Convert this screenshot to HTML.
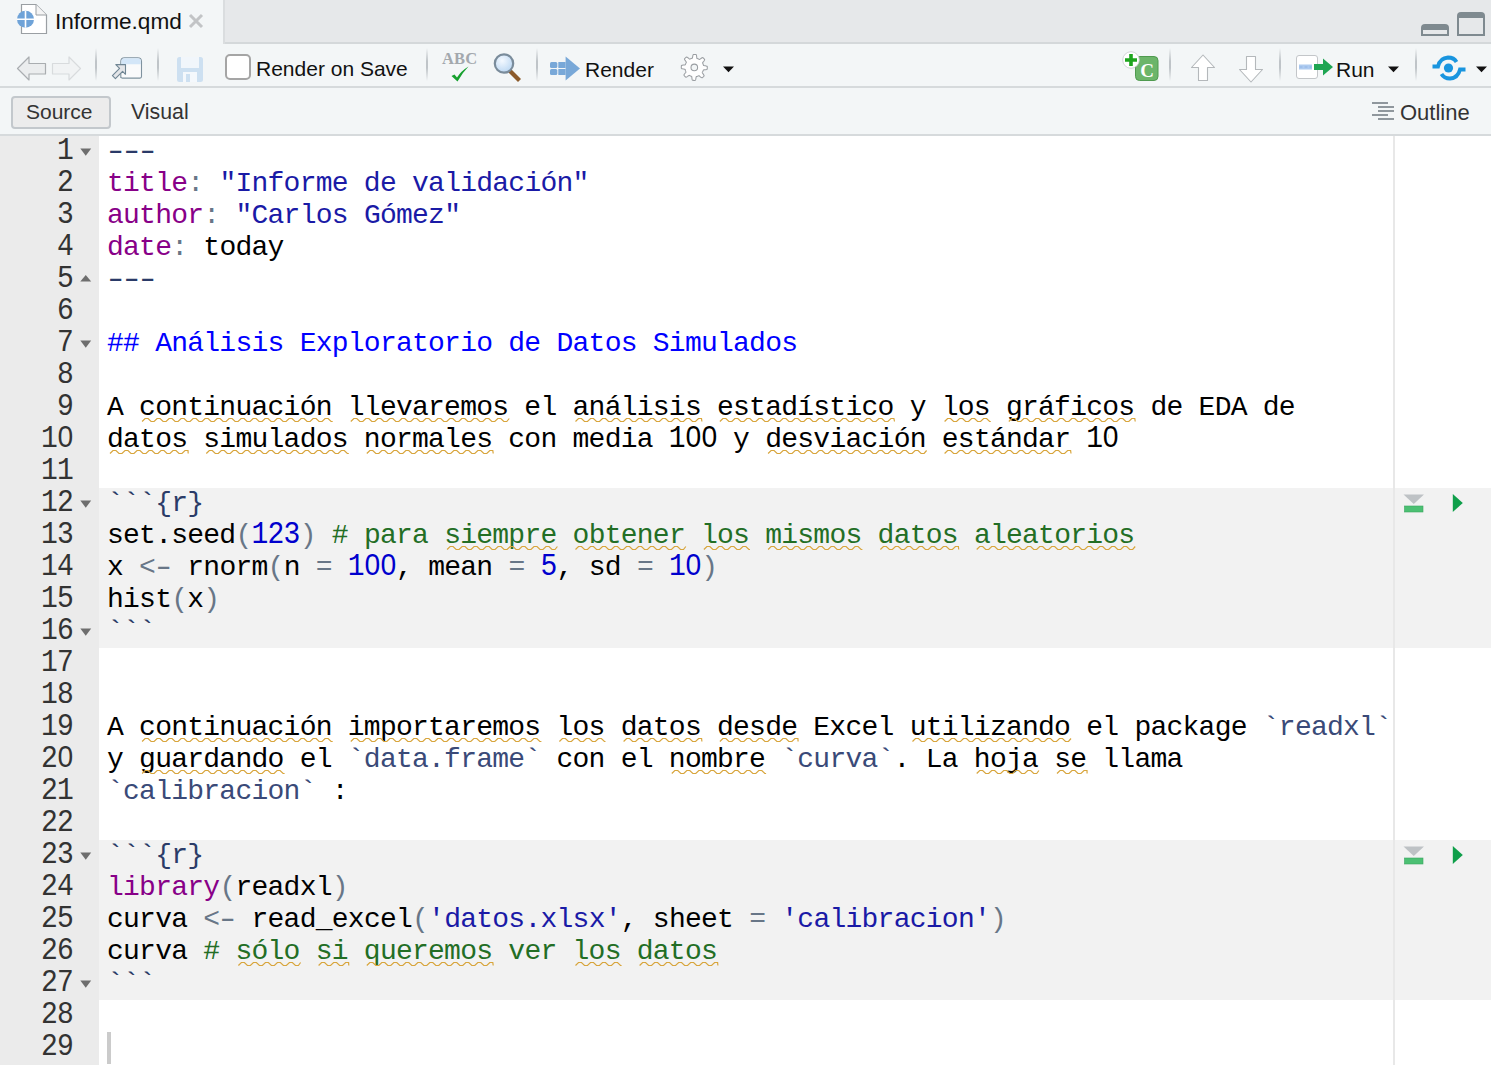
<!DOCTYPE html>
<html><head><meta charset="utf-8">
<style>
*{box-sizing:border-box;margin:0;padding:0}
html,body{width:1491px;height:1065px;overflow:hidden;background:#fff;font-family:"Liberation Sans",sans-serif}
.abs{position:absolute}
#tabbar{left:0;top:0;width:1491px;height:44px;background:#e6e8ea}
#tab{left:0;top:0;width:223px;height:44px;background:#f3f6f7}
#tabborder{left:223px;top:42px;width:1268px;height:2px;background:#d4d8da}
#tb1{left:0;top:44px;width:1491px;height:42px;background:#f3f6f7}
#tb1b{left:0;top:86px;width:1491px;height:2px;background:#d6dadc}
#tb2{left:0;top:88px;width:1491px;height:46px;background:#f3f6f7}
#tb2b{left:0;top:134px;width:1491px;height:2px;background:#d6dadc}
#gutter{left:0;top:136px;width:99px;height:929px;background:#ebebeb}
#editor{left:99px;top:136px;width:1392px;height:929px;background:#fff}
.chunk{left:99px;width:1392px;background:#f2f2f2}
#margin{left:1393px;top:136px;width:2px;height:929px;background:#e8e8e8}
.ui{font-family:"Liberation Sans",sans-serif;color:#1a1a1a;white-space:nowrap}
.code{font-family:"Liberation Mono",monospace;font-size:28px;letter-spacing:-0.75px;line-height:32px;white-space:pre;color:#000}
.ln{position:absolute;left:0;width:73px;text-align:right;transform:scaleY(1.1);transform-origin:0 23px;font-family:"Liberation Mono",monospace;font-size:28px;letter-spacing:-0.75px;line-height:32px;color:#333}
.row{position:absolute;left:107px;height:32px}
.kw{color:#880088}
.str{color:#1a1aa6}
.num{color:#0000cd}
.op{color:#687687}
.com{color:#236e25}
.tick{color:#2b3c68}
.yd{color:#2a3a68}
.icode{color:#3a4a78}
.hd{color:#0000ff}
.sp{}
.hy{display:inline-block;transform:scaleX(1.45)}
.z,.zc{position:relative}
.z::after,.zc::after{content:"";position:absolute;left:6.4px;top:10.8px;width:4.2px;height:4.6px;background:#fff}
.zc::after{background:#f2f2f2}
.zg{position:relative}
.zg::after{content:"";position:absolute;left:6.4px;top:10.8px;width:4.2px;height:4.6px;background:#ebebeb}
.dg{display:inline-block;transform:scaleY(1.1);transform-origin:0 23px}
.sep{width:2px;background:linear-gradient(#f3f6f7,#bfc4c8 40%,#bfc4c8 60%,#f3f6f7)}
</style></head><body>
<div class="abs" id="tabbar"></div>
<div class="abs" id="tab"></div>
<div class="abs" id="tabborder"></div>
<div class="abs" style="left:223px;top:0;width:2px;height:44px;background:#dadddf"></div>
<div class="abs" id="tb1"></div>
<div class="abs" id="tb1b"></div>
<div class="abs" id="tb2"></div>
<div class="abs" id="tb2b"></div>
<div class="abs" id="gutter"></div>
<div class="abs" id="editor"></div>
<div class="abs chunk" style="top:488px;height:160px"></div>
<div class="abs chunk" style="top:840px;height:160px"></div>
<div class="abs" id="margin"></div>

<!-- tab -->
<svg class="abs" style="left:14px;top:3px" width="36" height="34" viewBox="0 0 36 34">
  <path d="M7.5 1.5 H22 L32.5 12 V30.5 H7.5 Z" fill="#fff" stroke="#9a9fa3" stroke-width="1.2"/>
  <path d="M22 1.5 V12 H32.5" fill="#f4f4f4" stroke="#9a9fa3" stroke-width="1"/>
  <circle cx="11.5" cy="16.3" r="8.5" fill="#6fa3d8"/>
  <path d="M11.5 7.8 V24.8 M3 16.3 H20" stroke="#fff" stroke-width="1.6"/>
</svg>
<div class="abs ui" style="left:55px;top:9px;font-size:22.6px;color:#111">Informe.qmd</div>
<svg class="abs" style="left:188px;top:13px" width="16" height="16" viewBox="0 0 16 16"><path d="M2 2 L14 14 M14 2 L2 14" stroke="#c2c4c6" stroke-width="3"/></svg>
<!-- min/max -->
<svg class="abs" style="left:1420px;top:11px" width="66" height="26" viewBox="0 0 66 26">
  <path d="M1 25 V17 Q1 13 5 13 H25 Q29 13 29 17 V25 Z" fill="#7f8a90"/>
  <rect x="3" y="19" width="24" height="4" fill="#e6e8ea"/>
  <path d="M37 25 V5 Q37 1 41 1 H61 Q65 1 65 5 V25 Z" fill="#7f8a90"/>
  <rect x="39" y="7" width="24" height="16" fill="#e6e8ea"/>
</svg>

<!-- toolbar 1 -->
<svg class="abs" style="left:15px;top:55px" width="68" height="28" viewBox="0 0 68 28">
  <path d="M2.5 13.5 L14 2 V8.5 H30.5 V19 H14 V25 Z" fill="#ebedee" stroke="#a9adb0" stroke-width="1.2" stroke-linejoin="round"/>
  <path d="M65.5 13.5 L54 2 V8.5 H37.5 V19 H54 V25 Z" fill="#f1f3f4" stroke="#d8dbdd" stroke-width="1.2" stroke-linejoin="round"/>
</svg>
<div class="abs sep" style="left:95px;top:48px;height:33px"></div>
<svg class="abs" style="left:111px;top:55px" width="33" height="26" viewBox="0 0 33 26">
  <path d="M9.8 23 V6.5 Q9.8 2.7 13.6 2.7 H26.7 Q30.5 2.7 30.5 6.5 V21.6 Q30.5 23.1 29 23.1 H11.3 Q9.8 23.1 9.8 21.6 Z" fill="#f9fafb" stroke="#7f929f" stroke-width="1.1"/>
  <path d="M10.4 9.2 V6.5 Q10.4 3.3 13.6 3.3 H26.7 Q29.9 3.3 29.9 6.5 V9.2 Z" fill="#d3e6f8"/>
  <path d="M4.8 9.6 H14.5 V19.3 L11.6 16.4 L4.4 23.6 L1.4 20.6 L8.6 13.4 Z" fill="#e3e5e8" stroke="#6f8593" stroke-width="1.1" stroke-linejoin="round"/>
</svg>
<div class="abs sep" style="left:157px;top:48px;height:33px"></div>
<svg class="abs" style="left:176px;top:56px" width="28" height="27" viewBox="0 0 28 27">
  <rect x="1" y="1" width="26" height="25" rx="2.5" fill="#cde0f1"/>
  <rect x="5" y="1" width="18" height="11" fill="#f1f6fb"/>
  <rect x="7" y="16" width="14" height="10" fill="#f4f8fc"/>
  <rect x="10" y="18" width="4" height="8" fill="#cde0f1"/>
</svg>
<div class="abs" style="left:225px;top:54px;width:26px;height:26px;background:#fff;border:2px solid #a5a5a5;border-radius:5px"></div>
<div class="abs ui" style="left:256px;top:57px;font-size:21px;color:#111">Render on Save</div>
<div class="abs sep" style="left:426px;top:48px;height:33px"></div>
<div class="abs" style="left:442px;top:49px;font-family:'Liberation Serif',serif;font-weight:bold;font-size:16.5px;line-height:20px;color:#a3a8ad;letter-spacing:0.2px">ABC</div>
<svg class="abs" style="left:450px;top:65px" width="21" height="18" viewBox="0 0 21 18"><path d="M1.5 11 L4.5 9.5 L7 12.5 Q11 6 18.5 1.5 Q12.5 7.5 7.5 16.5 Z" fill="#16a02e"/></svg>
<svg class="abs" style="left:492px;top:52px" width="32" height="31" viewBox="0 0 32 31">
  <defs><radialGradient id="lg" cx="0.4" cy="0.35" r="0.7"><stop offset="0" stop-color="#f4f9ff"/><stop offset="1" stop-color="#b9d6f2"/></radialGradient></defs>
  <path d="M17.5 18.5 L27.5 28.5" stroke="#8b5a2b" stroke-width="4.2" stroke-linecap="butt"/>
  <circle cx="12" cy="11.5" r="9.2" fill="url(#lg)" stroke="#7a8c9b" stroke-width="2.2"/>
</svg>
<div class="abs sep" style="left:536px;top:48px;height:33px"></div>
<svg class="abs" style="left:549px;top:56px" width="33" height="26" viewBox="0 0 33 26">
  <rect x="1" y="6" width="7.3" height="6" rx="1.5" fill="#78a8d8"/>
  <rect x="9.3" y="6" width="7.3" height="6" rx="0.5" fill="#78a8d8"/>
  <rect x="1" y="13" width="7.3" height="6" rx="1.5" fill="#78a8d8"/>
  <rect x="9.3" y="13" width="7.3" height="6" rx="0.5" fill="#78a8d8"/>
  <path d="M16.6 0.5 L31 12.5 L16.6 24.5 Z" fill="#78a8d8"/>
</svg>
<div class="abs ui" style="left:585px;top:58px;font-size:21px;color:#111">Render</div>
<svg class="abs" style="left:680px;top:53px" width="29" height="29" viewBox="0 0 29 29"><path d="M14.75 1.41 L15.01 1.42 L15.26 1.44 L15.52 1.46 L15.77 1.48 L16.02 1.52 L16.25 1.73 L16.43 2.16 L16.56 2.76 L16.65 3.45 L16.72 4.14 L16.78 4.74 L16.86 5.17 L16.99 5.39 L17.17 5.45 L17.34 5.51 L17.51 5.57 L17.69 5.63 L17.86 5.70 L18.03 5.77 L18.20 5.85 L18.37 5.92 L18.53 6.01 L18.69 6.09 L18.86 6.18 L19.02 6.27 L19.18 6.36 L19.34 6.46 L19.59 6.41 L19.97 6.19 L20.46 5.84 L21.02 5.44 L21.60 5.06 L22.14 4.76 L22.58 4.61 L22.89 4.65 L23.08 4.82 L23.27 4.99 L23.45 5.17 L23.63 5.35 L23.81 5.53 L23.98 5.72 L24.15 5.91 L24.31 6.11 L24.47 6.31 L24.63 6.51 L24.64 6.82 L24.46 7.25 L24.13 7.77 L23.71 8.32 L23.26 8.85 L22.88 9.32 L22.64 9.68 L22.58 9.93 L22.66 10.10 L22.74 10.26 L22.82 10.43 L22.90 10.60 L22.97 10.76 L23.04 10.94 L23.10 11.11 L23.17 11.28 L23.23 11.46 L23.28 11.63 L23.34 11.81 L23.38 11.99 L23.43 12.17 L23.48 12.34 L23.69 12.49 L24.11 12.60 L24.71 12.71 L25.39 12.82 L26.07 12.95 L26.66 13.13 L27.08 13.34 L27.27 13.58 L27.29 13.83 L27.30 14.09 L27.30 14.34 L27.30 14.60 L27.29 14.85 L27.28 15.11 L27.26 15.36 L27.24 15.62 L27.22 15.87 L27.18 16.12 L26.97 16.35 L26.54 16.53 L25.94 16.66 L25.25 16.75 L24.56 16.82 L23.96 16.88 L23.53 16.96 L23.31 17.09 L23.25 17.27 L23.19 17.44 L23.13 17.61 L23.07 17.79 L23.00 17.96 L22.93 18.13 L22.85 18.30 L22.78 18.47 L22.69 18.63 L22.61 18.79 L22.52 18.96 L22.43 19.12 L22.34 19.28 L22.24 19.44 L22.29 19.69 L22.51 20.07 L22.86 20.56 L23.26 21.12 L23.64 21.70 L23.94 22.24 L24.09 22.68 L24.05 22.99 L23.88 23.18 L23.71 23.37 L23.53 23.55 L23.35 23.73 L23.17 23.91 L22.98 24.08 L22.79 24.25 L22.59 24.41 L22.39 24.57 L22.19 24.73 L21.88 24.74 L21.45 24.56 L20.93 24.23 L20.38 23.81 L19.85 23.36 L19.38 22.98 L19.02 22.74 L18.77 22.68 L18.60 22.76 L18.44 22.84 L18.27 22.92 L18.10 23.00 L17.94 23.07 L17.76 23.14 L17.59 23.20 L17.42 23.27 L17.24 23.33 L17.07 23.38 L16.89 23.44 L16.71 23.48 L16.53 23.53 L16.36 23.58 L16.21 23.79 L16.10 24.21 L15.99 24.81 L15.88 25.49 L15.75 26.17 L15.57 26.76 L15.36 27.18 L15.12 27.37 L14.87 27.39 L14.61 27.40 L14.36 27.40 L14.10 27.40 L13.85 27.39 L13.59 27.38 L13.34 27.36 L13.08 27.34 L12.83 27.32 L12.58 27.28 L12.35 27.07 L12.17 26.64 L12.04 26.04 L11.95 25.35 L11.88 24.66 L11.82 24.06 L11.74 23.63 L11.61 23.41 L11.43 23.35 L11.26 23.29 L11.09 23.23 L10.91 23.17 L10.74 23.10 L10.57 23.03 L10.40 22.95 L10.23 22.88 L10.07 22.79 L9.91 22.71 L9.74 22.62 L9.58 22.53 L9.42 22.44 L9.26 22.34 L9.01 22.39 L8.63 22.61 L8.14 22.96 L7.58 23.36 L7.00 23.74 L6.46 24.04 L6.02 24.19 L5.71 24.15 L5.52 23.98 L5.33 23.81 L5.15 23.63 L4.97 23.45 L4.79 23.27 L4.62 23.08 L4.45 22.89 L4.29 22.69 L4.13 22.49 L3.97 22.29 L3.96 21.98 L4.14 21.55 L4.47 21.03 L4.89 20.48 L5.34 19.95 L5.72 19.48 L5.96 19.12 L6.02 18.87 L5.94 18.70 L5.86 18.54 L5.78 18.37 L5.70 18.20 L5.63 18.04 L5.56 17.86 L5.50 17.69 L5.43 17.52 L5.37 17.34 L5.32 17.17 L5.26 16.99 L5.22 16.81 L5.17 16.63 L5.12 16.46 L4.91 16.31 L4.49 16.20 L3.89 16.09 L3.21 15.98 L2.53 15.85 L1.94 15.67 L1.52 15.46 L1.33 15.22 L1.31 14.97 L1.30 14.71 L1.30 14.46 L1.30 14.20 L1.31 13.95 L1.32 13.69 L1.34 13.44 L1.36 13.18 L1.38 12.93 L1.42 12.68 L1.63 12.45 L2.06 12.27 L2.66 12.14 L3.35 12.05 L4.04 11.98 L4.64 11.92 L5.07 11.84 L5.29 11.71 L5.35 11.53 L5.41 11.36 L5.47 11.19 L5.53 11.01 L5.60 10.84 L5.67 10.67 L5.75 10.50 L5.82 10.33 L5.91 10.17 L5.99 10.01 L6.08 9.84 L6.17 9.68 L6.26 9.52 L6.36 9.36 L6.31 9.11 L6.09 8.73 L5.74 8.24 L5.34 7.68 L4.96 7.10 L4.66 6.56 L4.51 6.12 L4.55 5.81 L4.72 5.62 L4.89 5.43 L5.07 5.25 L5.25 5.07 L5.43 4.89 L5.62 4.72 L5.81 4.55 L6.01 4.39 L6.21 4.23 L6.41 4.07 L6.72 4.06 L7.15 4.24 L7.67 4.57 L8.22 4.99 L8.75 5.44 L9.22 5.82 L9.58 6.06 L9.83 6.12 L10.00 6.04 L10.16 5.96 L10.33 5.88 L10.50 5.80 L10.66 5.73 L10.84 5.66 L11.01 5.60 L11.18 5.53 L11.36 5.47 L11.53 5.42 L11.71 5.36 L11.89 5.32 L12.07 5.27 L12.24 5.22 L12.39 5.01 L12.50 4.59 L12.61 3.99 L12.72 3.31 L12.85 2.63 L13.03 2.04 L13.24 1.62 L13.48 1.43 L13.73 1.41 L13.99 1.40 L14.24 1.40 L14.50 1.40Z" fill="#fefefe" stroke="#9a9ea2" stroke-width="1.05" stroke-linejoin="round"/><circle cx="14.3" cy="14.4" r="3.3" fill="#f3f6f7" stroke="#9a9ea2" stroke-width="1.05"/></svg>
<svg class="abs" style="left:723px;top:66px" width="12" height="7" viewBox="0 0 12 7"><path d="M0 0.5 H11 L5.5 6.3 Z" fill="#111"/></svg>

<!-- right toolbar -->
<svg class="abs" style="left:1120px;top:50px" width="40" height="33" viewBox="0 0 40 33">
  <rect x="15.5" y="6.5" width="22.5" height="24" rx="4" fill="#6cb56a" stroke="#4f9a4f" stroke-width="1"/>
  <text x="27" y="26.5" text-anchor="middle" font-family="Liberation Serif" font-weight="bold" font-size="19" fill="#fff">C</text>
  <circle cx="11" cy="10" r="8.3" fill="#fff" stroke="#c9cccf" stroke-width="0.8"/>
  <path d="M11 4 V16 M5 10 H17" stroke="#1ea51e" stroke-width="3.6"/>
</svg>
<div class="abs sep" style="left:1169px;top:48px;height:33px"></div>
<svg class="abs" style="left:1189px;top:53px" width="28" height="30" viewBox="0 0 28 30">
  <path d="M14 2 L25.5 14.5 H18.5 V27.5 H9.5 V14.5 H2.5 Z" fill="#fff" stroke="#b4b8bb" stroke-width="1.1" stroke-linejoin="round"/>
</svg>
<svg class="abs" style="left:1237px;top:54px" width="28" height="30" viewBox="0 0 28 30">
  <path d="M14 28 L25.5 15.5 H18.5 V2.5 H9.5 V15.5 H2.5 Z" fill="#fff" stroke="#b4b8bb" stroke-width="1.1" stroke-linejoin="round"/>
</svg>
<div class="abs sep" style="left:1279px;top:48px;height:33px"></div>
<svg class="abs" style="left:1295px;top:54px" width="40" height="26" viewBox="0 0 40 26">
  <rect x="1.5" y="1.5" width="21" height="23" rx="2.5" fill="#fff" stroke="#c3c6c9" stroke-width="1"/>
  <rect x="4" y="10.5" width="13" height="5" fill="#aecbf0"/>
  <path d="M4.5 13 H16.5" stroke="#8fb4e6" stroke-width="1" stroke-dasharray="3 2"/>
  <path d="M19 10 H28 V4.5 L38 13 L28 21.5 V16 H19 Z" fill="#1ea552"/>
</svg>
<div class="abs ui" style="left:1336px;top:58px;font-size:21px;color:#111">Run</div>
<svg class="abs" style="left:1388px;top:66px" width="12" height="7" viewBox="0 0 12 7"><path d="M0 0.5 H11 L5.5 6.3 Z" fill="#111"/></svg>
<div class="abs sep" style="left:1415px;top:48px;height:33px"></div>
<svg class="abs" style="left:1431px;top:55px" width="36" height="26" viewBox="0 0 36 26">
  <g fill="none" stroke="#1995df" stroke-width="3.8">
    <path d="M1.5 11.5 H7 Q9 3 17 2.5 Q23 2.5 25.5 7"/>
    <path d="M34.5 14.5 H29 Q27 23 19 23.5 Q13 23.5 10.5 19"/>
  </g>
  <circle cx="17.5" cy="13" r="4.6" fill="#1995df"/>
</svg>
<svg class="abs" style="left:1476px;top:66px" width="12" height="7" viewBox="0 0 12 7"><path d="M0 0.5 H11 L5.5 6.3 Z" fill="#111"/></svg>

<!-- toolbar 2 -->
<div class="abs" style="left:11px;top:96px;width:100px;height:33px;background:#ececec;border:2px solid #c3c8cc;border-radius:4px"></div>
<div class="abs ui" style="left:26px;top:100px;font-size:21px;color:#333">Source</div>
<div class="abs ui" style="left:131px;top:100px;font-size:21.3px;color:#333">Visual</div>
<svg class="abs" style="left:1371px;top:101px" width="24" height="20" viewBox="0 0 24 20">
  <g fill="#8f979d"><rect x="1" y="1" width="16" height="2"/><rect x="7" y="5" width="16" height="2"/><rect x="7" y="9" width="16" height="2"/><rect x="1" y="13" width="16" height="2"/><rect x="7" y="17" width="16" height="2"/></g>
</svg>
<div class="abs ui" style="left:1400px;top:100px;font-size:22px;color:#333">Outline</div>

<!-- code -->
<div id="lines" class="abs" style="left:0;top:136px;width:1491px;height:930px"><!--lines-->
<div class="ln" style="top:0px">1</div>
<div class="row code" style="top:0px"><span class="yd"><span class="hy">-</span><span class="hy">-</span><span class="hy">-</span></span></div>
<div class="ln" style="top:32px">2</div>
<div class="row code" style="top:32px"><span class="kw">title</span><span class="op">:</span> <span class="str">&quot;Informe de validación&quot;</span></div>
<div class="ln" style="top:64px">3</div>
<div class="row code" style="top:64px"><span class="kw">author</span><span class="op">:</span> <span class="str">&quot;Carlos Gómez&quot;</span></div>
<div class="ln" style="top:96px">4</div>
<div class="row code" style="top:96px"><span class="kw">date</span><span class="op">:</span> today</div>
<div class="ln" style="top:128px">5</div>
<div class="row code" style="top:128px"><span class="yd"><span class="hy">-</span><span class="hy">-</span><span class="hy">-</span></span></div>
<div class="ln" style="top:160px">6</div>
<div class="ln" style="top:192px">7</div>
<div class="row code" style="top:192px"><span class="hd">## Análisis Exploratorio de Datos Simulados</span></div>
<div class="ln" style="top:224px">8</div>
<div class="ln" style="top:256px">9</div>
<div class="row code" style="top:256px">A continuación llevaremos el análisis estadístico y los gráficos de EDA de</div>
<div class="ln" style="top:288px">1<span class="zg">0</span></div>
<div class="row code" style="top:288px">datos simulados normales con media <span class="dg">1<span class="z">0</span><span class="z">0</span></span> y desviación estándar <span class="dg">1<span class="z">0</span></span></div>
<div class="ln" style="top:320px">11</div>
<div class="ln" style="top:352px">12</div>
<div class="row code" style="top:352px"><span class="tick">```{r}</span></div>
<div class="ln" style="top:384px">13</div>
<div class="row code" style="top:384px">set.seed<span class="op">(</span><span class="num"><span class="dg">123</span></span><span class="op">)</span> <span class="com"># para siempre obtener los mismos datos aleatorios</span></div>
<div class="ln" style="top:416px">14</div>
<div class="row code" style="top:416px">x <span class="op">&lt;<span class="hy">-</span></span> rnorm<span class="op">(</span>n <span class="op">=</span> <span class="num"><span class="dg">1<span class="zc">0</span><span class="zc">0</span></span></span>, mean <span class="op">=</span> <span class="num"><span class="dg">5</span></span>, sd <span class="op">=</span> <span class="num"><span class="dg">1<span class="zc">0</span></span></span><span class="op">)</span></div>
<div class="ln" style="top:448px">15</div>
<div class="row code" style="top:448px">hist<span class="op">(</span>x<span class="op">)</span></div>
<div class="ln" style="top:480px">16</div>
<div class="row code" style="top:480px"><span class="tick">```</span></div>
<div class="ln" style="top:512px">17</div>
<div class="ln" style="top:544px">18</div>
<div class="ln" style="top:576px">19</div>
<div class="row code" style="top:576px">A continuación importaremos los datos desde Excel utilizando el package <span class="icode">`readxl`</span></div>
<div class="ln" style="top:608px">2<span class="zg">0</span></div>
<div class="row code" style="top:608px">y guardando el <span class="icode">`data.frame`</span> con el nombre <span class="icode">`curva`</span>. La hoja se llama</div>
<div class="ln" style="top:640px">21</div>
<div class="row code" style="top:640px"><span class="icode">`calibracion`</span> :</div>
<div class="ln" style="top:672px">22</div>
<div class="ln" style="top:704px">23</div>
<div class="row code" style="top:704px"><span class="tick">```{r}</span></div>
<div class="ln" style="top:736px">24</div>
<div class="row code" style="top:736px"><span class="kw">library</span><span class="op">(</span>readxl<span class="op">)</span></div>
<div class="ln" style="top:768px">25</div>
<div class="row code" style="top:768px">curva <span class="op">&lt;<span class="hy">-</span></span> read_excel<span class="op">(</span><span class="str">&#x27;datos.xlsx&#x27;</span>, sheet <span class="op">=</span> <span class="str">&#x27;calibracion&#x27;</span><span class="op">)</span></div>
<div class="ln" style="top:800px">26</div>
<div class="row code" style="top:800px">curva <span class="com"># sólo si queremos ver los datos</span></div>
<div class="ln" style="top:832px">27</div>
<div class="row code" style="top:832px"><span class="tick">```</span></div>
<div class="ln" style="top:864px">28</div>
<div class="ln" style="top:896px">29</div>
<!--/lines--></div>
<svg class="abs" style="left:80px;top:148px" width="12" height="9" viewBox="0 0 12 9"><path d="M0.3 0.6 H11.2 L5.75 7.8 Z" fill="#6e6e6e"/></svg>
<svg class="abs" style="left:80px;top:340px" width="12" height="9" viewBox="0 0 12 9"><path d="M0.3 0.6 H11.2 L5.75 7.8 Z" fill="#6e6e6e"/></svg>
<svg class="abs" style="left:80px;top:500px" width="12" height="9" viewBox="0 0 12 9"><path d="M0.3 0.6 H11.2 L5.75 7.8 Z" fill="#6e6e6e"/></svg>
<svg class="abs" style="left:80px;top:628px" width="12" height="9" viewBox="0 0 12 9"><path d="M0.3 0.6 H11.2 L5.75 7.8 Z" fill="#6e6e6e"/></svg>
<svg class="abs" style="left:80px;top:852px" width="12" height="9" viewBox="0 0 12 9"><path d="M0.3 0.6 H11.2 L5.75 7.8 Z" fill="#6e6e6e"/></svg>
<svg class="abs" style="left:80px;top:980px" width="12" height="9" viewBox="0 0 12 9"><path d="M0.3 0.6 H11.2 L5.75 7.8 Z" fill="#6e6e6e"/></svg>
<svg class="abs" style="left:80px;top:275px" width="12" height="9" viewBox="0 0 12 9"><path d="M0.3 6.6 H11.2 L5.75 0 Z" fill="#6e6e6e"/></svg>
<svg class="abs" style="left:1403px;top:494px" width="22" height="20" viewBox="0 0 22 20"><path d="M0.5 0.5 H21 L10.75 10 Z" fill="#bec2c5"/><rect x="1.5" y="12" width="18.5" height="6" fill="#4cc073" stroke="#3aa560" stroke-width="0.6"/></svg><svg class="abs" style="left:1452px;top:494px" width="12" height="19" viewBox="0 0 12 19"><path d="M0.8 0 L10.8 9 L0.8 18 Z" fill="#0f9f4a"/></svg>
<svg class="abs" style="left:1403px;top:846px" width="22" height="20" viewBox="0 0 22 20"><path d="M0.5 0.5 H21 L10.75 10 Z" fill="#bec2c5"/><rect x="1.5" y="12" width="18.5" height="6" fill="#4cc073" stroke="#3aa560" stroke-width="0.6"/></svg><svg class="abs" style="left:1452px;top:846px" width="12" height="19" viewBox="0 0 12 19"><path d="M0.8 0 L10.8 9 L0.8 18 Z" fill="#0f9f4a"/></svg>
<div class="abs" style="left:107px;top:1032px;width:4px;height:32px;background:#cbcbcb"></div>
<!--waves--><svg class="abs" style="left:0;top:0" width="1491" height="1065" viewBox="0 0 1491 1065"><path d="M142.1 421.5 L145.1 418.5 L148.1 418.5 L151.1 421.5 L154.1 421.5 L157.1 418.5 L160.1 418.5 L163.1 421.5 L166.1 421.5 L169.1 418.5 L172.1 418.5 L175.1 421.5 L178.1 421.5 L181.1 418.5 L184.1 418.5 L187.1 421.5 L190.1 421.5 L193.1 418.5 L196.1 418.5 L199.1 421.5 L202.1 421.5 L205.1 418.5 L208.1 418.5 L211.1 421.5 L214.1 421.5 L217.1 418.5 L220.1 418.5 L223.1 421.5 L226.1 421.5 L229.1 418.5 L232.1 418.5 L235.1 421.5 L238.1 421.5 L241.1 418.5 L244.1 418.5 L247.1 421.5 L250.1 421.5 L253.1 418.5 L256.1 418.5 L259.1 421.5 L262.1 421.5 L265.1 418.5 L268.1 418.5 L271.1 421.5 L274.1 421.5 L277.1 418.5 L280.1 418.5 L283.1 421.5 L286.1 421.5 L289.1 418.5 L292.1 418.5 L295.1 421.5 L298.1 421.5 L301.1 418.5 L304.1 418.5 L307.1 421.5 L310.1 421.5 L313.1 418.5 L316.1 418.5 L319.1 421.5 L322.1 421.5 L325.1 418.5 L328.1 418.5 L331.1 421.5 L332.7 421.5 M350.8 421.5 L353.8 418.5 L356.8 418.5 L359.8 421.5 L362.8 421.5 L365.8 418.5 L368.8 418.5 L371.8 421.5 L374.8 421.5 L377.8 418.5 L380.8 418.5 L383.8 421.5 L386.8 421.5 L389.8 418.5 L392.8 418.5 L395.8 421.5 L398.8 421.5 L401.8 418.5 L404.8 418.5 L407.8 421.5 L410.8 421.5 L413.8 418.5 L416.8 418.5 L419.8 421.5 L422.8 421.5 L425.8 418.5 L428.8 418.5 L431.8 421.5 L434.8 421.5 L437.8 418.5 L440.8 418.5 L443.8 421.5 L446.8 421.5 L449.8 418.5 L452.8 418.5 L455.8 421.5 L458.8 421.5 L461.8 418.5 L464.8 418.5 L467.8 421.5 L470.8 421.5 L473.8 418.5 L476.8 418.5 L479.8 421.5 L482.8 421.5 L485.8 418.5 L488.8 418.5 L491.8 421.5 L494.8 421.5 L497.8 418.5 L500.8 418.5 L503.8 421.5 L506.8 421.5 L509.2 418.5 M575.5 421.5 L578.5 418.5 L581.5 418.5 L584.5 421.5 L587.5 421.5 L590.5 418.5 L593.5 418.5 L596.5 421.5 L599.5 421.5 L602.5 418.5 L605.5 418.5 L608.5 421.5 L611.5 421.5 L614.5 418.5 L617.5 418.5 L620.5 421.5 L623.5 421.5 L626.5 418.5 L629.5 418.5 L632.5 421.5 L635.5 421.5 L638.5 418.5 L641.5 418.5 L644.5 421.5 L647.5 421.5 L650.5 418.5 L653.5 418.5 L656.5 421.5 L659.5 421.5 L662.5 418.5 L665.5 418.5 L668.5 421.5 L671.5 421.5 L674.5 418.5 L677.5 418.5 L680.5 421.5 L683.5 421.5 L686.5 418.5 L689.5 418.5 L692.5 421.5 L695.5 421.5 L698.5 418.5 L701.5 418.5 L701.9 421.5 M719.9 421.5 L722.9 418.5 L725.9 418.5 L728.9 421.5 L731.9 421.5 L734.9 418.5 L737.9 418.5 L740.9 421.5 L743.9 421.5 L746.9 418.5 L749.9 418.5 L752.9 421.5 L755.9 421.5 L758.9 418.5 L761.9 418.5 L764.9 421.5 L767.9 421.5 L770.9 418.5 L773.9 418.5 L776.9 421.5 L779.9 421.5 L782.9 418.5 L785.9 418.5 L788.9 421.5 L791.9 421.5 L794.9 418.5 L797.9 418.5 L800.9 421.5 L803.9 421.5 L806.9 418.5 L809.9 418.5 L812.9 421.5 L815.9 421.5 L818.9 418.5 L821.9 418.5 L824.9 421.5 L827.9 421.5 L830.9 418.5 L833.9 418.5 L836.9 421.5 L839.9 421.5 L842.9 418.5 L845.9 418.5 L848.9 421.5 L851.9 421.5 L854.9 418.5 L857.9 418.5 L860.9 421.5 L863.9 421.5 L866.9 418.5 L869.9 418.5 L872.9 421.5 L875.9 421.5 L878.9 418.5 L881.9 418.5 L884.9 421.5 L887.9 421.5 L890.9 418.5 L893.9 418.5 L894.5 421.5 M944.6 421.5 L947.6 418.5 L950.6 418.5 L953.6 421.5 L956.6 421.5 L959.6 418.5 L962.6 418.5 L965.6 421.5 L968.6 421.5 L971.6 418.5 L974.6 418.5 L977.6 421.5 L980.6 421.5 L983.6 418.5 L986.6 418.5 L989.6 421.5 L990.8 421.5 M1008.8 421.5 L1011.8 418.5 L1014.8 418.5 L1017.8 421.5 L1020.8 421.5 L1023.8 418.5 L1026.8 418.5 L1029.8 421.5 L1032.8 421.5 L1035.8 418.5 L1038.8 418.5 L1041.8 421.5 L1044.8 421.5 L1047.8 418.5 L1050.8 418.5 L1053.8 421.5 L1056.8 421.5 L1059.8 418.5 L1062.8 418.5 L1065.8 421.5 L1068.8 421.5 L1071.8 418.5 L1074.8 418.5 L1077.8 421.5 L1080.8 421.5 L1083.8 418.5 L1086.8 418.5 L1089.8 421.5 L1092.8 421.5 L1095.8 418.5 L1098.8 418.5 L1101.8 421.5 L1104.8 421.5 L1107.8 418.5 L1110.8 418.5 L1113.8 421.5 L1116.8 421.5 L1119.8 418.5 L1122.8 418.5 L1125.8 421.5 L1128.8 421.5 L1131.8 418.5 L1134.8 418.5 L1135.2 421.5 M110.0 453.5 L113.0 450.5 L116.0 450.5 L119.0 453.5 L122.0 453.5 L125.0 450.5 L128.0 450.5 L131.0 453.5 L134.0 453.5 L137.0 450.5 L140.0 450.5 L143.0 453.5 L146.0 453.5 L149.0 450.5 L152.0 450.5 L155.0 453.5 L158.0 453.5 L161.0 450.5 L164.0 450.5 L167.0 453.5 L170.0 453.5 L173.0 450.5 L176.0 450.5 L179.0 453.5 L182.0 453.5 L185.0 450.5 L188.0 450.5 L188.2 453.5 M206.3 453.5 L209.3 450.5 L212.3 450.5 L215.3 453.5 L218.3 453.5 L221.3 450.5 L224.3 450.5 L227.3 453.5 L230.3 453.5 L233.3 450.5 L236.3 450.5 L239.3 453.5 L242.3 453.5 L245.3 450.5 L248.3 450.5 L251.3 453.5 L254.3 453.5 L257.3 450.5 L260.3 450.5 L263.3 453.5 L266.3 453.5 L269.3 450.5 L272.3 450.5 L275.3 453.5 L278.3 453.5 L281.3 450.5 L284.3 450.5 L287.3 453.5 L290.3 453.5 L293.3 450.5 L296.3 450.5 L299.3 453.5 L302.3 453.5 L305.3 450.5 L308.3 450.5 L311.3 453.5 L314.3 453.5 L317.3 450.5 L320.3 450.5 L323.3 453.5 L326.3 453.5 L329.3 450.5 L332.3 450.5 L335.3 453.5 L338.3 453.5 L341.3 450.5 L344.3 450.5 L347.3 453.5 L348.8 453.5 M366.8 453.5 L369.8 450.5 L372.8 450.5 L375.8 453.5 L378.8 453.5 L381.8 450.5 L384.8 450.5 L387.8 453.5 L390.8 453.5 L393.8 450.5 L396.8 450.5 L399.8 453.5 L402.8 453.5 L405.8 450.5 L408.8 450.5 L411.8 453.5 L414.8 453.5 L417.8 450.5 L420.8 450.5 L423.8 453.5 L426.8 453.5 L429.8 450.5 L432.8 450.5 L435.8 453.5 L438.8 453.5 L441.8 450.5 L444.8 450.5 L447.8 453.5 L450.8 453.5 L453.8 450.5 L456.8 450.5 L459.8 453.5 L462.8 453.5 L465.8 450.5 L468.8 450.5 L471.8 453.5 L474.8 453.5 L477.8 450.5 L480.8 450.5 L483.8 453.5 L486.8 453.5 L489.8 450.5 L492.8 450.5 L493.2 453.5 M768.1 453.5 L771.1 450.5 L774.1 450.5 L777.1 453.5 L780.1 453.5 L783.1 450.5 L786.1 450.5 L789.1 453.5 L792.1 453.5 L795.1 450.5 L798.1 450.5 L801.1 453.5 L804.1 453.5 L807.1 450.5 L810.1 450.5 L813.1 453.5 L816.1 453.5 L819.1 450.5 L822.1 450.5 L825.1 453.5 L828.1 453.5 L831.1 450.5 L834.1 450.5 L837.1 453.5 L840.1 453.5 L843.1 450.5 L846.1 450.5 L849.1 453.5 L852.1 453.5 L855.1 450.5 L858.1 450.5 L861.1 453.5 L864.1 453.5 L867.1 450.5 L870.1 450.5 L873.1 453.5 L876.1 453.5 L879.1 450.5 L882.1 450.5 L885.1 453.5 L888.1 453.5 L891.1 450.5 L894.1 450.5 L897.1 453.5 L900.1 453.5 L903.1 450.5 L906.1 450.5 L909.1 453.5 L912.1 453.5 L915.1 450.5 L918.1 450.5 L921.1 453.5 L924.1 453.5 L926.6 450.5 M944.6 453.5 L947.6 450.5 L950.6 450.5 L953.6 453.5 L956.6 453.5 L959.6 450.5 L962.6 450.5 L965.6 453.5 L968.6 453.5 L971.6 450.5 L974.6 450.5 L977.6 453.5 L980.6 453.5 L983.6 450.5 L986.6 450.5 L989.6 453.5 L992.6 453.5 L995.6 450.5 L998.6 450.5 L1001.6 453.5 L1004.6 453.5 L1007.6 450.5 L1010.6 450.5 L1013.6 453.5 L1016.6 453.5 L1019.6 450.5 L1022.6 450.5 L1025.6 453.5 L1028.6 453.5 L1031.6 450.5 L1034.6 450.5 L1037.6 453.5 L1040.6 453.5 L1043.6 450.5 L1046.6 450.5 L1049.6 453.5 L1052.6 453.5 L1055.6 450.5 L1058.6 450.5 L1061.6 453.5 L1064.6 453.5 L1067.6 450.5 L1070.6 450.5 L1071.0 453.5 M447.1 549.5 L450.1 546.5 L453.1 546.5 L456.1 549.5 L459.1 549.5 L462.1 546.5 L465.1 546.5 L468.1 549.5 L471.1 549.5 L474.1 546.5 L477.1 546.5 L480.1 549.5 L483.1 549.5 L486.1 546.5 L489.1 546.5 L492.1 549.5 L495.1 549.5 L498.1 546.5 L501.1 546.5 L504.1 549.5 L507.1 549.5 L510.1 546.5 L513.0 546.5 L516.0 549.5 L519.0 549.5 L522.0 546.5 L525.0 546.5 L528.0 549.5 L531.0 549.5 L534.0 546.5 L537.0 546.5 L540.0 549.5 L543.0 549.5 L546.0 546.5 L549.0 546.5 L552.0 549.5 L555.0 549.5 L557.4 546.5 M575.5 549.5 L578.5 546.5 L581.5 546.5 L584.5 549.5 L587.5 549.5 L590.5 546.5 L593.5 546.5 L596.5 549.5 L599.5 549.5 L602.5 546.5 L605.5 546.5 L608.5 549.5 L611.5 549.5 L614.5 546.5 L617.5 546.5 L620.5 549.5 L623.5 549.5 L626.5 546.5 L629.5 546.5 L632.5 549.5 L635.5 549.5 L638.5 546.5 L641.5 546.5 L644.5 549.5 L647.5 549.5 L650.5 546.5 L653.5 546.5 L656.5 549.5 L659.5 549.5 L662.5 546.5 L665.5 546.5 L668.5 549.5 L671.5 549.5 L674.5 546.5 L677.5 546.5 L680.5 549.5 L683.5 549.5 L685.8 546.5 M703.9 549.5 L706.9 546.5 L709.9 546.5 L712.9 549.5 L715.9 549.5 L718.9 546.5 L721.9 546.5 L724.9 549.5 L727.9 549.5 L730.9 546.5 L733.9 546.5 L736.9 549.5 L739.9 549.5 L742.9 546.5 L745.9 546.5 L748.9 549.5 L750.0 549.5 M768.1 549.5 L771.1 546.5 L774.1 546.5 L777.1 549.5 L780.1 549.5 L783.1 546.5 L786.1 546.5 L789.1 549.5 L792.1 549.5 L795.1 546.5 L798.1 546.5 L801.1 549.5 L804.1 549.5 L807.1 546.5 L810.1 546.5 L813.1 549.5 L816.1 549.5 L819.1 546.5 L822.1 546.5 L825.1 549.5 L828.1 549.5 L831.1 546.5 L834.1 546.5 L837.1 549.5 L840.1 549.5 L843.1 546.5 L846.1 546.5 L849.1 549.5 L852.1 549.5 L855.1 546.5 L858.1 546.5 L861.1 549.5 L862.4 549.5 M880.4 549.5 L883.4 546.5 L886.4 546.5 L889.4 549.5 L892.4 549.5 L895.4 546.5 L898.4 546.5 L901.4 549.5 L904.4 549.5 L907.4 546.5 L910.4 546.5 L913.4 549.5 L916.4 549.5 L919.4 546.5 L922.4 546.5 L925.4 549.5 L928.4 549.5 L931.4 546.5 L934.4 546.5 L937.4 549.5 L940.4 549.5 L943.4 546.5 L946.4 546.5 L949.4 549.5 L952.4 549.5 L955.4 546.5 L958.4 546.5 L958.7 549.5 M976.7 549.5 L979.7 546.5 L982.7 546.5 L985.7 549.5 L988.7 549.5 L991.7 546.5 L994.7 546.5 L997.7 549.5 L1000.7 549.5 L1003.7 546.5 L1006.7 546.5 L1009.7 549.5 L1012.7 549.5 L1015.7 546.5 L1018.7 546.5 L1021.7 549.5 L1024.7 549.5 L1027.7 546.5 L1030.7 546.5 L1033.7 549.5 L1036.7 549.5 L1039.7 546.5 L1042.7 546.5 L1045.7 549.5 L1048.7 549.5 L1051.7 546.5 L1054.7 546.5 L1057.7 549.5 L1060.7 549.5 L1063.7 546.5 L1066.7 546.5 L1069.7 549.5 L1072.7 549.5 L1075.7 546.5 L1078.7 546.5 L1081.7 549.5 L1084.7 549.5 L1087.7 546.5 L1090.7 546.5 L1093.7 549.5 L1096.7 549.5 L1099.7 546.5 L1102.7 546.5 L1105.7 549.5 L1108.7 549.5 L1111.7 546.5 L1114.7 546.5 L1117.7 549.5 L1120.7 549.5 L1123.7 546.5 L1126.7 546.5 L1129.7 549.5 L1132.7 549.5 L1135.2 546.5 M142.1 741.5 L145.1 738.5 L148.1 738.5 L151.1 741.5 L154.1 741.5 L157.1 738.5 L160.1 738.5 L163.1 741.5 L166.1 741.5 L169.1 738.5 L172.1 738.5 L175.1 741.5 L178.1 741.5 L181.1 738.5 L184.1 738.5 L187.1 741.5 L190.1 741.5 L193.1 738.5 L196.1 738.5 L199.1 741.5 L202.1 741.5 L205.1 738.5 L208.1 738.5 L211.1 741.5 L214.1 741.5 L217.1 738.5 L220.1 738.5 L223.1 741.5 L226.1 741.5 L229.1 738.5 L232.1 738.5 L235.1 741.5 L238.1 741.5 L241.1 738.5 L244.1 738.5 L247.1 741.5 L250.1 741.5 L253.1 738.5 L256.1 738.5 L259.1 741.5 L262.1 741.5 L265.1 738.5 L268.1 738.5 L271.1 741.5 L274.1 741.5 L277.1 738.5 L280.1 738.5 L283.1 741.5 L286.1 741.5 L289.1 738.5 L292.1 738.5 L295.1 741.5 L298.1 741.5 L301.1 738.5 L304.1 738.5 L307.1 741.5 L310.1 741.5 L313.1 738.5 L316.1 738.5 L319.1 741.5 L322.1 741.5 L325.1 738.5 L328.1 738.5 L331.1 741.5 L332.7 741.5 M350.8 741.5 L353.8 738.5 L356.8 738.5 L359.8 741.5 L362.8 741.5 L365.8 738.5 L368.8 738.5 L371.8 741.5 L374.8 741.5 L377.8 738.5 L380.8 738.5 L383.8 741.5 L386.8 741.5 L389.8 738.5 L392.8 738.5 L395.8 741.5 L398.8 741.5 L401.8 738.5 L404.8 738.5 L407.8 741.5 L410.8 741.5 L413.8 738.5 L416.8 738.5 L419.8 741.5 L422.8 741.5 L425.8 738.5 L428.8 738.5 L431.8 741.5 L434.8 741.5 L437.8 738.5 L440.8 738.5 L443.8 741.5 L446.8 741.5 L449.8 738.5 L452.8 738.5 L455.8 741.5 L458.8 741.5 L461.8 738.5 L464.8 738.5 L467.8 741.5 L470.8 741.5 L473.8 738.5 L476.8 738.5 L479.8 741.5 L482.8 741.5 L485.8 738.5 L488.8 738.5 L491.8 741.5 L494.8 741.5 L497.8 738.5 L500.8 738.5 L503.8 741.5 L506.8 741.5 L509.8 738.5 L512.8 738.5 L515.8 741.5 L518.8 741.5 L521.8 738.5 L524.8 738.5 L527.8 741.5 L530.8 741.5 L533.8 738.5 L536.8 738.5 L539.8 741.5 L541.4 741.5 M559.4 741.5 L562.4 738.5 L565.4 738.5 L568.4 741.5 L571.4 741.5 L574.4 738.5 L577.4 738.5 L580.4 741.5 L583.4 741.5 L586.4 738.5 L589.4 738.5 L592.4 741.5 L595.4 741.5 L598.4 738.5 L601.4 738.5 L604.4 741.5 L605.5 741.5 M623.6 741.5 L626.6 738.5 L629.6 738.5 L632.6 741.5 L635.6 741.5 L638.6 738.5 L641.6 738.5 L644.6 741.5 L647.6 741.5 L650.6 738.5 L653.6 738.5 L656.6 741.5 L659.6 741.5 L662.6 738.5 L665.6 738.5 L668.6 741.5 L671.6 741.5 L674.6 738.5 L677.6 738.5 L680.6 741.5 L683.6 741.5 L686.6 738.5 L689.6 738.5 L692.6 741.5 L695.6 741.5 L698.6 738.5 L701.6 738.5 L701.9 741.5 M719.9 741.5 L722.9 738.5 L725.9 738.5 L728.9 741.5 L731.9 741.5 L734.9 738.5 L737.9 738.5 L740.9 741.5 L743.9 741.5 L746.9 738.5 L749.9 738.5 L752.9 741.5 L755.9 741.5 L758.9 738.5 L761.9 738.5 L764.9 741.5 L767.9 741.5 L770.9 738.5 L773.9 738.5 L776.9 741.5 L779.9 741.5 L782.9 738.5 L785.9 738.5 L788.9 741.5 L791.9 741.5 L794.9 738.5 L797.9 738.5 L798.1 741.5 M912.5 741.5 L915.5 738.5 L918.5 738.5 L921.5 741.5 L924.5 741.5 L927.5 738.5 L930.5 738.5 L933.5 741.5 L936.5 741.5 L939.5 738.5 L942.5 738.5 L945.5 741.5 L948.5 741.5 L951.5 738.5 L954.5 738.5 L957.5 741.5 L960.5 741.5 L963.5 738.5 L966.5 738.5 L969.5 741.5 L972.5 741.5 L975.5 738.5 L978.5 738.5 L981.5 741.5 L984.5 741.5 L987.5 738.5 L990.5 738.5 L993.5 741.5 L996.5 741.5 L999.5 738.5 L1002.5 738.5 L1005.5 741.5 L1008.5 741.5 L1011.5 738.5 L1014.5 738.5 L1017.5 741.5 L1020.5 741.5 L1023.5 738.5 L1026.5 738.5 L1029.5 741.5 L1032.5 741.5 L1035.5 738.5 L1038.5 738.5 L1041.5 741.5 L1044.5 741.5 L1047.5 738.5 L1050.5 738.5 L1053.5 741.5 L1056.5 741.5 L1059.5 738.5 L1062.5 738.5 L1065.5 741.5 L1068.5 741.5 L1071.0 738.5 M142.1 773.5 L145.1 770.5 L148.1 770.5 L151.1 773.5 L154.1 773.5 L157.1 770.5 L160.1 770.5 L163.1 773.5 L166.1 773.5 L169.1 770.5 L172.1 770.5 L175.1 773.5 L178.1 773.5 L181.1 770.5 L184.1 770.5 L187.1 773.5 L190.1 773.5 L193.1 770.5 L196.1 770.5 L199.1 773.5 L202.1 773.5 L205.1 770.5 L208.1 770.5 L211.1 773.5 L214.1 773.5 L217.1 770.5 L220.1 770.5 L223.1 773.5 L226.1 773.5 L229.1 770.5 L232.1 770.5 L235.1 773.5 L238.1 773.5 L241.1 770.5 L244.1 770.5 L247.1 773.5 L250.1 773.5 L253.1 770.5 L256.1 770.5 L259.1 773.5 L262.1 773.5 L265.1 770.5 L268.1 770.5 L271.1 773.5 L274.1 773.5 L277.1 770.5 L280.1 770.5 L283.1 773.5 L284.6 773.5 M671.8 773.5 L674.8 770.5 L677.8 770.5 L680.8 773.5 L683.8 773.5 L686.8 770.5 L689.8 770.5 L692.8 773.5 L695.8 773.5 L698.8 770.5 L701.8 770.5 L704.8 773.5 L707.8 773.5 L710.8 770.5 L713.8 770.5 L716.8 773.5 L719.8 773.5 L722.8 770.5 L725.8 770.5 L728.8 773.5 L731.8 773.5 L734.8 770.5 L737.8 770.5 L740.8 773.5 L743.8 773.5 L746.8 770.5 L749.8 770.5 L752.8 773.5 L755.8 773.5 L758.8 770.5 L761.8 770.5 L764.8 773.5 L766.1 773.5 M976.7 773.5 L979.7 770.5 L982.7 770.5 L985.7 773.5 L988.7 773.5 L991.7 770.5 L994.7 770.5 L997.7 773.5 L1000.7 773.5 L1003.7 770.5 L1006.7 770.5 L1009.7 773.5 L1012.7 773.5 L1015.7 770.5 L1018.7 770.5 L1021.7 773.5 L1024.7 773.5 L1027.7 770.5 L1030.7 770.5 L1033.7 773.5 L1036.7 773.5 L1038.9 770.5 M1057.0 773.5 L1060.0 770.5 L1063.0 770.5 L1066.0 773.5 L1069.0 773.5 L1072.0 770.5 L1075.0 770.5 L1078.0 773.5 L1081.0 773.5 L1084.0 770.5 L1087.0 770.5 L1087.1 773.5 M238.4 965.5 L241.4 962.5 L244.4 962.5 L247.4 965.5 L250.4 965.5 L253.4 962.5 L256.4 962.5 L259.4 965.5 L262.4 965.5 L265.4 962.5 L268.4 962.5 L271.4 965.5 L274.4 965.5 L277.4 962.5 L280.4 962.5 L283.4 965.5 L286.4 965.5 L289.4 962.5 L292.4 962.5 L295.4 965.5 L298.4 965.5 L300.6 962.5 M318.6 965.5 L321.6 962.5 L324.6 962.5 L327.6 965.5 L330.6 965.5 L333.6 962.5 L336.6 962.5 L339.6 965.5 L342.6 965.5 L345.6 962.5 L348.6 962.5 L348.8 965.5 M366.8 965.5 L369.8 962.5 L372.8 962.5 L375.8 965.5 L378.8 965.5 L381.8 962.5 L384.8 962.5 L387.8 965.5 L390.8 965.5 L393.8 962.5 L396.8 962.5 L399.8 965.5 L402.8 965.5 L405.8 962.5 L408.8 962.5 L411.8 965.5 L414.8 965.5 L417.8 962.5 L420.8 962.5 L423.8 965.5 L426.8 965.5 L429.8 962.5 L432.8 962.5 L435.8 965.5 L438.8 965.5 L441.8 962.5 L444.8 962.5 L447.8 965.5 L450.8 965.5 L453.8 962.5 L456.8 962.5 L459.8 965.5 L462.8 965.5 L465.8 962.5 L468.8 962.5 L471.8 965.5 L474.8 965.5 L477.8 962.5 L480.8 962.5 L483.8 965.5 L486.8 965.5 L489.8 962.5 L492.8 962.5 L493.2 965.5 M575.5 965.5 L578.5 962.5 L581.5 962.5 L584.5 965.5 L587.5 965.5 L590.5 962.5 L593.5 962.5 L596.5 965.5 L599.5 965.5 L602.5 962.5 L605.5 962.5 L608.5 965.5 L611.5 965.5 L614.5 962.5 L617.5 962.5 L620.5 965.5 L621.6 965.5 M639.6 965.5 L642.6 962.5 L645.6 962.5 L648.6 965.5 L651.6 965.5 L654.6 962.5 L657.6 962.5 L660.6 965.5 L663.6 965.5 L666.6 962.5 L669.6 962.5 L672.6 965.5 L675.6 965.5 L678.6 962.5 L681.6 962.5 L684.6 965.5 L687.6 965.5 L690.6 962.5 L693.6 962.5 L696.6 965.5 L699.6 965.5 L702.6 962.5 L705.6 962.5 L708.6 965.5 L711.6 965.5 L714.6 962.5 L717.6 962.5 L717.9 965.5" fill="none" stroke="#d8a53c" stroke-width="1.2" stroke-linejoin="miter"/></svg><!--/waves-->
</body></html>
